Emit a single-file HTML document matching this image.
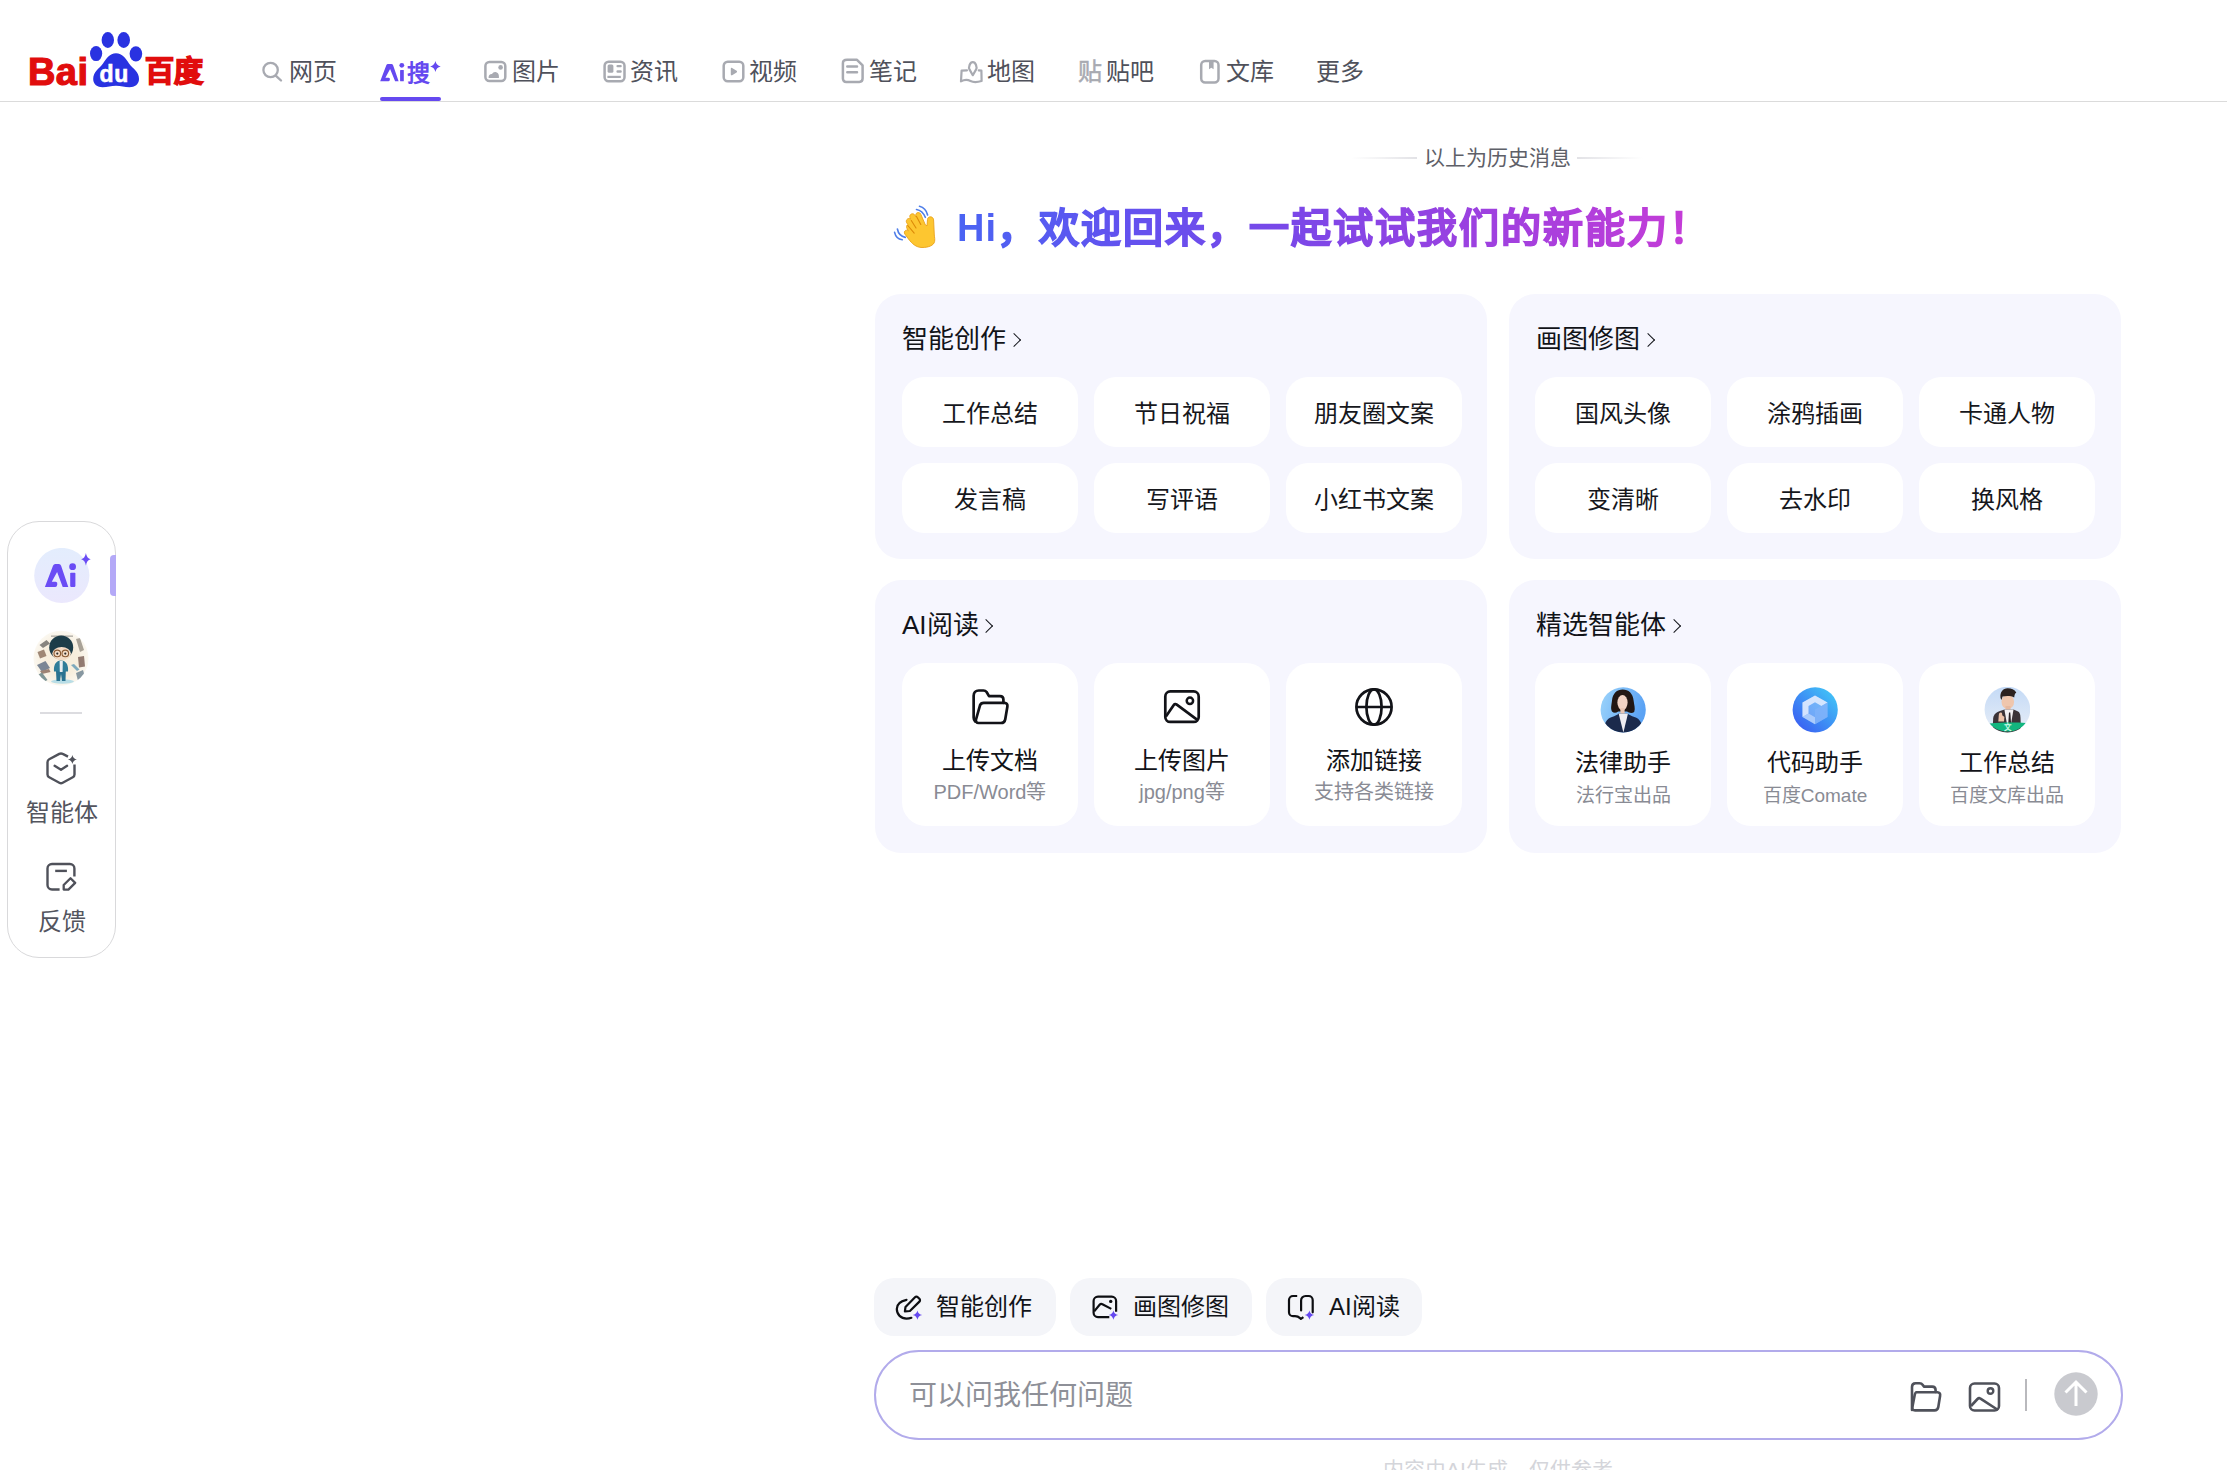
<!DOCTYPE html>
<html lang="zh-CN">
<head>
<meta charset="utf-8">
<style>
*{box-sizing:border-box;margin:0;padding:0}
html,body{width:2227px;height:1470px;overflow:hidden;background:#fff}
body{font-family:"Liberation Sans",sans-serif;color:#1f2026;position:relative}
.abs{position:absolute}
#hdr{position:absolute;left:0;top:0;width:2227px;height:102px;border-bottom:1px solid #dbdbdb}
.nav{position:absolute;top:57px;height:30px;font-size:24px;line-height:30px;color:#4f515b;white-space:nowrap}
.nav svg{position:absolute;top:4px;left:0}
.nav span{position:absolute;top:0}
.hist{position:absolute;left:1351px;top:146px;width:292px;height:24px;font-size:21px;line-height:24px;color:#5e6068;text-align:center}
.hist:before,.hist:after{content:"";position:absolute;top:11px;width:66px;height:2px}
.hist:before{left:0;background:linear-gradient(90deg,rgba(225,225,228,0),#e2e2e6)}
.hist:after{right:0;background:linear-gradient(90deg,#e2e2e6,rgba(225,225,228,0))}
.card{position:absolute;width:612px;background:#f6f6fe;border-radius:26px}
.ctitle{position:absolute;left:27px;top:30px;font-size:26px;line-height:30px;color:#111318;white-space:nowrap}
.ctitle i{display:inline-block;width:10px;height:10px;border-right:1.8px solid #111318;border-top:1.8px solid #111318;transform:rotate(45deg);margin-left:2.5px;position:relative;top:-3px}
.btn{position:absolute;width:176px;height:70px;padding-top:2px;background:#fff;border-radius:22px;font-size:24px;line-height:70px;text-align:center;color:#16171c}
.tile{position:absolute;top:83px;width:176px;height:163px;background:#fff;border-radius:24px;text-align:center}
.tile .t{position:absolute;left:0;right:0;top:85px;font-size:24px;line-height:26px;color:#121318}
.tile .s{position:absolute;left:0;right:0;top:117px;font-size:20px;line-height:24px;color:#898b94}
.tile svg{position:absolute}
.chip{position:absolute;top:1278px;height:58px;background:#f4f5f9;border-radius:20px;font-size:24px;line-height:58px;color:#111318;white-space:nowrap}
.chip svg{position:absolute;top:16px}
.chip span{position:absolute;top:0}
</style>
</head>
<body>
<div id="hdr">
  <!-- logo -->
  <svg class="abs" style="left:0;top:0" width="220" height="100" viewBox="0 0 220 100">
    <text x="28" y="85" font-family="Liberation Sans" font-weight="bold" font-size="38" fill="#e10d0d" stroke="#e10d0d" stroke-width="1.2" letter-spacing="0.4">Bai</text>
    <g fill="#2932e1">
      <ellipse cx="107.8" cy="40" rx="6.2" ry="7.9"/>
      <ellipse cx="123.7" cy="40" rx="6.3" ry="7.9"/>
      <ellipse cx="96.1" cy="53.6" rx="6.1" ry="7.5"/>
      <ellipse cx="135.9" cy="53.8" rx="6.3" ry="7.6"/>
      <path d="M116 53.3 C109.5 53.3 106.5 58.5 103 63.5 C99 69 93.2 71.5 93.2 79 C93.2 84.5 97.5 87.2 102.5 87.2 C107.5 87.2 111 85.8 116 85.8 C121 85.8 124.5 87.2 129.5 87.2 C134.5 87.2 139 84.5 139 79 C139 71.5 133 69 129 63.5 C125.5 58.5 122.5 53.3 116 53.3 Z"/>
    </g>
    <text x="99.5" y="81.5" font-family="Liberation Sans" font-weight="bold" font-size="23" fill="#fff" stroke="#fff" stroke-width="0.6" letter-spacing="0.6">du</text>
    <text x="144.5" y="82" font-weight="bold" font-size="29" fill="#e10d0d" stroke="#e10d0d" stroke-width="1.6" letter-spacing="0.5">百度</text>
  </svg>

  <!-- nav -->
  <div class="nav" style="left:261px;width:80px">
    <svg width="24" height="24" viewBox="0 0 24 24" style="top:3px"><circle cx="9.6" cy="10" r="7.2" fill="none" stroke="#a8aab1" stroke-width="2.3"/><path d="M15 15.8 L20 20.5" stroke="#a8aab1" stroke-width="2.4" stroke-linecap="round"/></svg>
    <span style="left:28px">网页</span>
  </div>
  <div class="nav" style="left:380px;width:62px;color:#6549f0">
    <svg width="62" height="30" viewBox="0 0 62 30" style="top:0">
      <path d="M0.2 24.3 L6.3 8.3 Q6.8 7 8 7 L11.4 7 Q12.6 7 13.1 8.3 L18.6 24.3 L15.1 24.3 L10.1 12 L5.4 20.8 L8.6 20.8 Q10.2 21 9.9 22.6 L9.7 23.3 Q9.4 24.3 8.4 24.3 Z" fill="#6549f0"/>
      <rect x="20.1" y="13.1" width="3.7" height="11.2" rx="0.5" fill="#6549f0"/>
      <circle cx="21.8" cy="8.3" r="2.4" fill="#6549f0"/>
      <path d="M55.4 4.1 Q56.3 8.58 60.7 9.5 Q56.3 10.42 55.4 14.9 Q54.5 10.42 50.1 9.5 Q54.5 8.58 55.4 4.1Z" fill="#6549f0"/>
    </svg>
    <span style="left:27px;top:1px;font-size:23px;font-weight:bold;color:#6549f0">搜</span>
  </div>
  <div class="abs" style="left:380px;top:97px;width:61px;height:4px;border-radius:2px;background:#6549f0"></div>
  <div class="nav" style="left:483px;width:80px">
    <svg width="26" height="24" viewBox="0 0 26 24" style="top:3px"><rect x="2.4" y="2" width="19.9" height="19" rx="4" fill="none" stroke="#a8aab1" stroke-width="2.5"/><circle cx="17.6" cy="7.4" r="2.3" fill="#a8aab1"/><path d="M5.6 18 C5.3 15.6 7 13.9 9 14.1 C9.8 12.6 11.2 11.9 12.5 12.1 C14.5 12.4 15.9 14.1 15.9 16.1 L15.9 18Z" fill="#a8aab1"/></svg>
    <span style="left:29px">图片</span>
  </div>
  <div class="nav" style="left:602px;width:80px">
    <svg width="26" height="24" viewBox="0 0 26 24" style="top:3px"><rect x="2.6" y="1.7" width="19.9" height="19.6" rx="4" fill="none" stroke="#a8aab1" stroke-width="2.5"/><rect x="5.6" y="4.4" width="5.8" height="8.4" rx="1.5" fill="#a8aab1"/><path d="M15.6 6.1 L18.6 6.1 M15.6 11.5 L18.6 11.5" stroke="#a8aab1" stroke-width="2.4" stroke-linecap="round"/><path d="M5.4 16.9 L18.8 16.9" stroke="#a8aab1" stroke-width="2.2"/></svg>
    <span style="left:28px">资讯</span>
  </div>
  <div class="nav" style="left:721px;width:80px">
    <svg width="26" height="24" viewBox="0 0 26 24" style="top:3px"><rect x="2.7" y="1.7" width="19.6" height="19.6" rx="4" fill="none" stroke="#a8aab1" stroke-width="2.5"/><path d="M9.8 8.6 C9.8 7.9 10.5 7.5 11.1 7.9 L15.6 10.8 C16.2 11.2 16.2 12 15.6 12.4 L11.1 15.3 C10.5 15.7 9.8 15.3 9.8 14.6Z" fill="#a8aab1"/></svg>
    <span style="left:28px">视频</span>
  </div>
  <div class="nav" style="left:841px;width:80px">
    <svg width="26" height="26" viewBox="0 0 26 26" style="top:1px"><path d="M6 1.8 L16 1.8 L21.6 7.4 L21.6 20.6 C21.6 22.6 20.3 23.9 18.3 23.9 L5.2 23.9 C3.2 23.9 1.9 22.6 1.9 20.6 L1.9 5.2 C1.9 3.2 3.6 1.8 6 1.8Z" fill="none" stroke="#a8aab1" stroke-width="2.5" stroke-linejoin="round"/><path d="M6.3 8.4 L16 8.4 M6.3 14.2 L16 14.2" stroke="#a8aab1" stroke-width="2.5" stroke-linecap="round"/></svg>
    <span style="left:28px">笔记</span>
  </div>
  <div class="nav" style="left:959px;width:80px">
    <svg width="26" height="24" viewBox="0 0 26 24" style="top:3px"><path d="M13.8 15.2 L10.6 9.6 C9.2 7.2 10.9 2.2 13.8 2.2 C16.7 2.2 18.4 7.2 17 9.6Z" fill="none" stroke="#a8aab1" stroke-width="2.2" stroke-linejoin="round"/><path d="M8 10.3 L2.6 10.6 L2 21.4 C5.5 19.5 8.5 19.5 11.5 21 C14.5 22.5 17.5 22.5 22.6 21 L22.4 10.6 L19.8 10.3" fill="none" stroke="#a8aab1" stroke-width="2.2" stroke-linejoin="round" stroke-linecap="round"/></svg>
    <span style="left:28px">地图</span>
  </div>
  <div class="nav" style="left:1078px;width:80px">
    <span style="left:0;color:#a8aab1;-webkit-text-stroke:0.5px #a8aab1">贴</span>
    <span style="left:28px">贴吧</span>
  </div>
  <div class="nav" style="left:1198px;width:80px">
    <svg width="24" height="26" viewBox="0 0 24 26" style="top:2px"><rect x="3.2" y="2" width="17.3" height="21.5" rx="4" fill="none" stroke="#a8aab1" stroke-width="2.5"/><path d="M11 2 L15.6 2 L15.6 10.3 L13.3 8.8 L11 10.3Z" fill="#a8aab1"/></svg>
    <span style="left:28px">文库</span>
  </div>
  <div class="nav" style="left:1316px;width:60px">
    <span style="left:0">更多</span>
  </div>
</div>

<div class="hist">以上为历史消息</div>

<!-- heading -->
<svg class="abs" style="left:885px;top:198px" width="60" height="57" viewBox="0 0 60 57">
  <path d="M37 49.5 C31 49.5 27 45.5 23.5 41 L19.8 36 C19 34.8 19.3 33 20.6 32.4 C21.6 31.9 22.6 32.2 23.4 33 L22 30.5 C21.2 29.2 21.5 27.3 22.8 26.4 L21.7 24.8 C20.9 23.5 21.3 21.7 22.6 20.9 C23.6 20.3 24.8 20.4 25.6 21.1 L25 19.6 C24.4 18.2 25 16.6 26.4 16 C27.8 15.4 29.3 16 30 17.3 L31 19 L30.8 17.6 C30.5 16.1 31.4 14.8 32.9 14.6 C34.4 14.4 35.6 15.3 36 16.7 L40.4 27 L42 27.8 L42.5 21.5 C42.6 19.7 44 18.7 45.6 18.8 C47.3 18.9 48.5 20.2 48.6 21.9 L49.3 37 C49.6 39.5 50 41.5 49.6 43.5 C48.8 47.5 43.5 49.5 37 49.5Z" fill="#fdc630" stroke="#e9a21c" stroke-width="0.9"/>
  <path d="M31.5 18.5 L35.8 26.5 M26.3 22.5 L31 30 M22.8 27.5 L29.2 35.2" fill="none" stroke="#dc8a08" stroke-width="1.1" stroke-linecap="round"/>
  <path d="M31.5 11.5 Q37.5 12.5 40.3 19.3 M34.5 8.3 Q40.8 9.8 42.6 17" fill="none" stroke="#4f7ee8" stroke-width="1.6" stroke-linecap="round"/>
  <path d="M12.4 31 Q13.6 37.8 20.3 39.4 M9.6 34.3 Q11 40.8 17.2 41.8" fill="none" stroke="#4f7ee8" stroke-width="1.6" stroke-linecap="round"/>
</svg>
<div class="abs" style="left:957px;top:201px;height:54px;font-size:40px;line-height:54px;letter-spacing:2px;font-weight:bold;white-space:nowrap;background:linear-gradient(90deg,#4a64f3 0%,#6252ef 22%,#7b47e8 45%,#a040df 72%,#c93cd6 100%);-webkit-background-clip:text;background-clip:text;color:transparent;-webkit-text-stroke:1.3px transparent"><span style="font-size:38px;letter-spacing:1px;vertical-align:1px;-webkit-text-stroke:0 transparent">Hi</span>，欢迎回来，一起试试我们的新能力！</div>

<!-- card 1 -->
<div class="card" style="left:875px;top:294px;height:265px">
  <div class="ctitle">智能创作<i></i></div>
  <div class="btn" style="left:27px;top:83px">工作总结</div>
  <div class="btn" style="left:219px;top:83px">节日祝福</div>
  <div class="btn" style="left:411px;top:83px">朋友圈文案</div>
  <div class="btn" style="left:27px;top:169px">发言稿</div>
  <div class="btn" style="left:219px;top:169px">写评语</div>
  <div class="btn" style="left:411px;top:169px">小红书文案</div>
</div>
<!-- card 2 -->
<div class="card" style="left:1509px;top:294px;height:265px">
  <div class="ctitle">画图修图<i></i></div>
  <div class="btn" style="left:26px;top:83px">国风头像</div>
  <div class="btn" style="left:218px;top:83px">涂鸦插画</div>
  <div class="btn" style="left:410px;top:83px">卡通人物</div>
  <div class="btn" style="left:26px;top:169px">变清晰</div>
  <div class="btn" style="left:218px;top:169px">去水印</div>
  <div class="btn" style="left:410px;top:169px">换风格</div>
</div>
<!-- card 3 -->
<div class="card" style="left:875px;top:580px;height:273px">
  <div class="ctitle">AI阅读<i></i></div>
  <div class="tile" style="left:27px">
    <svg style="left:68px;top:25px" width="40" height="40" viewBox="0 0 40 40"><path d="M5.2 33.6 C4.2 32.6 3.65 31.2 3.65 29.5 L3.65 7.8 C3.65 4.8 5.6 2.5 8.8 2.5 L13.5 2.5 C14.8 2.5 15.8 3 16.6 4 L19 8.1 L30 8.1 C32 8.1 33.4 9.6 33.4 11.6 L33.4 14.8" fill="none" stroke="#121318" stroke-width="2.7" stroke-linejoin="round" stroke-linecap="round"/><path d="M13.8 14.8 L34.6 14.8 C36.5 14.8 37.8 16.4 37.4 18.4 L35.2 31.4 C34.8 33.6 33.2 35 31 35 L8.5 35 C6.5 35 5.5 33.5 6 31.5 L10 17.3 C10.5 15.8 12 14.8 13.8 14.8Z" fill="none" stroke="#121318" stroke-width="2.7" stroke-linejoin="round"/></svg>
    <div class="t">上传文档</div>
    <div class="s">PDF/Word等</div>
  </div>
  <div class="tile" style="left:219px">
    <svg style="left:68px;top:25px" width="40" height="40" viewBox="0 0 40 40"><rect x="3.3" y="3.4" width="33.4" height="30.5" rx="5" fill="none" stroke="#121318" stroke-width="2.7"/><circle cx="27.9" cy="12.8" r="3.2" fill="none" stroke="#121318" stroke-width="2.5"/><path d="M3.9 28.6 L11.6 17.2 C12.4 16 13.6 15.8 14.8 16.6 L36 32.3" fill="none" stroke="#121318" stroke-width="2.7" stroke-linejoin="round"/></svg>
    <div class="t">上传图片</div>
    <div class="s">jpg/png等</div>
  </div>
  <div class="tile" style="left:411px">
    <svg style="left:68px;top:24px" width="40" height="40" viewBox="0 0 40 40"><circle cx="20" cy="20" r="17.6" fill="none" stroke="#121318" stroke-width="2.7"/><ellipse cx="20" cy="20" rx="7.6" ry="17.6" fill="none" stroke="#121318" stroke-width="2.7"/><path d="M3 20 L37 20" stroke="#121318" stroke-width="2.7"/></svg>
    <div class="t">添加链接</div>
    <div class="s">支持各类链接</div>
  </div>
</div>
<!-- card 4 -->
<div class="card" style="left:1509px;top:580px;height:273px">
  <div class="ctitle">精选智能体<i></i></div>
  <div class="tile" style="left:26px">
    <svg style="left:65px;top:24px" width="46" height="46" viewBox="0 0 46 46">
      <defs><linearGradient id="law" x1="0" y1="0" x2="1" y2="0.3"><stop offset="0" stop-color="#9fd6fb"/><stop offset="1" stop-color="#5aa2f4"/></linearGradient><clipPath id="c46"><circle cx="23.2" cy="22.8" r="22.6"/></clipPath></defs>
      <g clip-path="url(#c46)">
        <rect width="46" height="46" fill="url(#law)"/>
        <path d="M12 24.5 C10.3 21.5 11.6 17.5 12 13.5 C12.6 6.5 17 2.6 22.7 2.6 C28.5 2.6 33 6.5 33.6 13.5 C34 17.5 35.6 21.5 34.2 25 C32.2 26.6 29.2 26.2 27 24.6 L18.2 24.6 C16 26.2 13.6 26.2 12 24.5Z" fill="#211714"/>
        <ellipse cx="22.5" cy="15.6" rx="5.1" ry="7.6" fill="#f1d3c4"/>
        <rect x="20.4" y="21" width="4.2" height="6.5" fill="#e9c6b3"/>
        <path d="M3 46 C4 36.5 6.5 31.5 12 30 C15 29.1 17.6 27.8 18.8 26.6 L27.6 26.6 C28.8 27.8 31.4 29.1 34.4 30 C40 31.5 42.4 36.5 43.4 46Z" fill="#1b2a4c"/>
        <path d="M18.6 26.6 L28 26.6 L23.4 45.5Z" fill="#efedf2"/>
      </g>
    </svg>
    <div class="t" style="top:87px">法律助手</div>
    <div class="s" style="top:121px;font-size:19px">法行宝出品</div>
  </div>
  <div class="tile" style="left:218px">
    <svg style="left:65px;top:24px" width="46" height="46" viewBox="0 0 46 46">
      <defs><linearGradient id="cm" x1="0.1" y1="0.9" x2="0.9" y2="0.1"><stop offset="0" stop-color="#3a5ff2"/><stop offset="1" stop-color="#41c3f7"/></linearGradient></defs>
      <circle cx="23.2" cy="22.8" r="22.6" fill="url(#cm)"/>
      <path d="M23 8.5 L35.5 15.6 L35.5 30 L23 37.2 L10.5 30 L10.5 15.6Z" fill="#9bc4fb" opacity="0.55"/>
      <path d="M23 8.5 L35.5 15.6 L29.5 19 L23 15.3 L16.5 19 L16.5 26.6 L10.5 30 L10.5 15.6Z" fill="#dfeafe" opacity="0.9"/>
      <path d="M23 22.5 L29.5 19 L35.5 15.6 L35.5 30 L23 37.2Z" fill="#7fb2fa" opacity="0.75"/>
      <path d="M16.5 26.6 L23 30.3 L23 37.2 L10.5 30Z" fill="#b9d5fd" opacity="0.8"/>
    </svg>
    <div class="t" style="top:87px">代码助手</div>
    <div class="s" style="top:121px;font-size:19px">百度Comate</div>
  </div>
  <div class="tile" style="left:410px">
    <svg style="left:65px;top:24px" width="46" height="46" viewBox="0 0 46 46">
      <defs><linearGradient id="wk" x1="0" y1="0" x2="0" y2="1"><stop offset="0" stop-color="#c4daf6"/><stop offset="1" stop-color="#e8eef7"/></linearGradient><clipPath id="c46b"><circle cx="23.4" cy="22.6" r="22.8"/></clipPath></defs>
      <g clip-path="url(#c46b)">
        <rect width="46" height="46" fill="url(#wk)"/>
        <ellipse cx="23.8" cy="14.8" rx="6.3" ry="7.3" fill="#efc6ad"/>
        <path d="M16.5 11 C15.8 5 19 1.5 23.5 1.3 C27 1.2 30.5 2.5 32.3 5.5 C31 6 30.5 8 30.2 10.5 C27 8.5 22 8.6 18.5 9.5 L17.5 13Z" fill="#2b2220"/>
        <rect x="21.5" y="19" width="5" height="5" fill="#e6b9a0"/>
        <path d="M8.5 46 L9.2 31 C9.8 27 12.5 25.2 16 24 L20.5 22.6 L29.5 22.6 L33 24 C36 25.2 36.3 27.5 36.5 31 L37 46Z" fill="#3b3337"/>
        <path d="M20.4 22.6 L29.5 22.6 L26.5 40 L23.5 40Z" fill="#f2f0f2"/>
        <path d="M25 25.5 L26.3 25.5 L27.2 38 L24.2 38Z" fill="#2a2326"/>
        <path d="M14.3 34.5 L14.8 28 C15 26 16.2 25.4 17 25.6 C18 25.8 18.4 27 18.2 28.2 L20.4 30 L20 34.6Z" fill="#ecc2a8"/>
        <path d="M5.5 36.4 C17 35.5 30 35.3 42 36 C38 41 31 44.6 23.8 44.6 C16.5 44.6 9.5 41.2 5.5 36.4Z" fill="#13b67f"/>
        <text x="23.8" y="42.6" font-size="7.5" fill="#c9fbe6" text-anchor="middle" font-weight="bold">文</text>
      </g>
    </svg>
    <div class="t" style="top:87px">工作总结</div>
    <div class="s" style="top:121px;font-size:19px">百度文库出品</div>
  </div>
</div>

<!-- sidebar -->
<div class="abs" style="left:7px;top:521px;width:109px;height:437px;border:1.5px solid #d9d9db;border-radius:32px;background:#fff"></div>
<div class="abs" style="left:110px;top:555px;width:6px;height:41px;background:#b4a9f7;border-radius:4px 0 0 4px"></div>
<svg class="abs" style="left:33px;top:548px" width="60" height="58" viewBox="0 0 60 58">
  <defs><linearGradient id="aib" x1="0" y1="0" x2="0" y2="1"><stop offset="0" stop-color="#e3edfd"/><stop offset="1" stop-color="#ebe8fd"/></linearGradient></defs>
  <circle cx="28.8" cy="27.5" r="27.6" fill="url(#aib)"/>
  <path d="M11.9 38.9 L20 17.8 Q20.7 16.1 22.3 16.1 L25.9 16.1 Q27.5 16.1 28.1 17.8 L35.3 38.9 L29.7 38.9 L24.1 23.9 L18.8 33.8 L22.6 33.8 Q24.8 34 24.3 36.3 L24 37.4 Q23.6 38.9 22 38.9 Z" fill="#6a4cf5"/>
  <rect x="37.2" y="24.7" width="5.2" height="14.2" rx="0.8" fill="#6a4cf5"/>
  <circle cx="39.6" cy="18.7" r="3.4" fill="#6a4cf5"/>
  <path d="M52.9 4.9 Q53.72 10.13 57.7 11.2 Q53.72 12.27 52.9 17.5 Q52.08 12.27 48.1 11.2 Q52.08 10.13 52.9 4.9Z" fill="#6a4cf5"/>
</svg>
<svg class="abs" style="left:33px;top:630px" width="56" height="57" viewBox="0 0 56 57">
  <defs><radialGradient id="cr" cx="0.5" cy="0.5" r="0.5"><stop offset="0.6" stop-color="#f7eedd"/><stop offset="1" stop-color="#fbf8f1"/></radialGradient><clipPath id="c56"><circle cx="28" cy="28.2" r="27.5"/></clipPath></defs>
  <g clip-path="url(#c56)">
    <rect width="56" height="57" fill="url(#cr)"/>
    <g opacity="0.72"><path d="M18 5.5 L40 5.5 L40 6.8 L18 6.8Z" fill="#8d8a85"/>
    <path d="M6.5 15 L13.5 10 L17 13.5 L10 18Z" fill="#5c5a58"/>
    <path d="M4.5 22 L11 19.5 L13.5 26 L7 28.5Z" fill="#7d5f4c"/>
    <path d="M4 35 L12.5 31 L17 38 L9 42Z" fill="#4c5e78"/>
    <path d="M7 41 L16 39 L17.5 42 L9 44Z" fill="#7a5848"/>
    <path d="M4.5 45 L9 42.5 L14.5 50 L10 52.5Z" fill="#4f6f74"/>
    <path d="M43 9 L47 8 L51 20 L47 22Z" fill="#8a8378"/>
    <path d="M45 27 L51 26 L52 36.5 L46 37.5Z" fill="#6b4d45"/>
    <path d="M38 35 L41 34 L46.5 39.5 L44 41Z" fill="#4f8fb0"/>
    <path d="M43 43 L50 40 L52 47 L45 51Z" fill="#5b7484"/>
    </g>
    <ellipse cx="29.5" cy="51.5" rx="11.5" ry="2.2" fill="#b8dde6"/>
    <path d="M23 41 L32.8 41 L32.5 51 L29 51 L28 44 L27 51 L23.5 51Z" fill="#2b7391"/>
    <path d="M21 41.5 C20.5 36 22 31 28 30.6 C34 31 35.5 36 35 41.5Z" fill="#2f7d98"/>
    <path d="M26.6 31 L29.8 31 L29.6 42 L26.8 42Z" fill="#e9eef0"/>
    <circle cx="28.2" cy="17.5" r="12" fill="#1d3d49"/>
    <ellipse cx="28.6" cy="23.6" rx="9.3" ry="6.6" fill="#f4dcc6"/>
    <path d="M19 18 C22 15 33 14.5 38.5 18.5 L38.5 14 C34 9 22 9 19 13Z" fill="#1d3d49"/>
    <circle cx="24.3" cy="23.4" r="3.3" fill="none" stroke="#8a5a34" stroke-width="1.1"/>
    <circle cx="32.3" cy="23.4" r="3.3" fill="none" stroke="#8a5a34" stroke-width="1.1"/>
    <circle cx="24.3" cy="23.6" r="1.1" fill="#2a2a2a"/>
    <circle cx="32.3" cy="23.6" r="1.1" fill="#2a2a2a"/>
  </g>
</svg>
<div class="abs" style="left:40px;top:712px;width:42px;height:2px;background:#dcdce0"></div>
<svg class="abs" style="left:44px;top:750px" width="36" height="38" viewBox="0 0 36 38">
  <path d="M24 6.6 L18.7 3.9 C17.6 3.3 16.4 3.3 15.3 3.9 L5.2 9.3 C4.1 9.9 3.5 11 3.5 12.2 L3.5 24.5 C3.5 25.7 4.1 26.7 5.2 27.3 L15.3 32.7 C16.4 33.3 17.6 33.3 18.7 32.7 L28.8 27.3 C29.9 26.7 30.5 25.7 30.5 24.5 L30.5 14.5" fill="none" stroke="#4f515a" stroke-width="2.4" stroke-linecap="butt"/>
  <path d="M10.6 15.8 L17 19.8 L23.1 15.8" fill="none" stroke="#4f515a" stroke-width="2.4" stroke-linecap="round" stroke-linejoin="round"/>
  <path d="M28.4 5.1 Q29.16 8.83 32.9 9.6 Q29.16 10.37 28.4 14.1 Q27.63 10.37 23.9 9.6 Q27.63 8.83 28.4 5.1Z" fill="#4f515a"/>
</svg>
<div class="abs" style="left:0;top:796px;width:123px;font-size:24px;line-height:34px;text-align:center;color:#53555e">智能体</div>
<svg class="abs" style="left:44px;top:860px" width="36" height="36" viewBox="0 0 36 36">
  <path d="M15.6 29.5 L8 29.5 C5.5 29.5 3.5 27.5 3.5 25 L3.5 8.5 C3.5 6 5.5 4 8 4 L25.9 4 C28.4 4 30.4 6 30.4 8.5 L30.4 16.5" fill="none" stroke="#4f515a" stroke-width="2.4"/>
  <path d="M11.2 10.9 L22.9 10.9" stroke="#4f515a" stroke-width="2.4"/>
  <path d="M19.7 29.6 L19.7 25 L26.5 18.2 L31.2 22.9 L24.4 29.6 Z" fill="none" stroke="#4f515a" stroke-width="2.3" stroke-linejoin="round"/>
</svg>
<div class="abs" style="left:0;top:905px;width:123px;font-size:24px;line-height:34px;text-align:center;color:#53555e">反馈</div>

<!-- chips -->
<div class="chip" style="left:874px;width:182px">
  <svg style="left:20px;top:14px" width="30" height="30" viewBox="0 0 30 30">
    <path d="M12.5 7.8 C6.5 9 2.8 12.5 2.8 17 C2.8 22.5 7 26.6 12.5 26.6 C14.5 26.6 16 26.3 17.4 25.8" fill="none" stroke="#0d0e12" stroke-width="2.2" stroke-linecap="round"/>
    <path d="M10.9 19.4 L11.5 14.9 L21 5.2 C21.8 4.4 23 4.4 23.8 5.2 L25.4 6.8 C26.2 7.6 26.2 8.8 25.4 9.6 L15.9 19 Z" fill="none" stroke="#0d0e12" stroke-width="2.2" stroke-linejoin="round"/>
    <path d="M23.4 18.4 Q24.22 22.3 28.2 23.1 Q24.22 23.9 23.4 27.8 Q22.58 23.9 18.6 23.1 Q22.58 22.3 23.4 18.4Z" fill="#6549f0"/>
  </svg>
  <span style="left:62px">智能创作</span>
</div>
<div class="chip" style="left:1070px;width:182px">
  <svg style="left:20px;top:14px" width="30" height="30" viewBox="0 0 30 30">
    <path d="M19.3 25.1 L8 25.1 C5.5 25.1 3.6 23.2 3.6 20.7 L3.6 9.1 C3.6 6.6 5.5 4.7 8 4.7 L21.7 4.7 C24.2 4.7 26.1 6.6 26.1 9.1 L26.1 19.8" fill="none" stroke="#0d0e12" stroke-width="2.2"/>
    <path d="M4.2 19.4 L9.6 12.8 C10.4 11.9 11.4 11.7 12.4 12.2 L21.3 16.9" fill="none" stroke="#0d0e12" stroke-width="2.2" stroke-linejoin="round"/>
    <circle cx="20.7" cy="9.4" r="1.7" fill="#0d0e12"/>
    <path d="M23.4 18.4 Q24.22 22.3 28.2 23.1 Q24.22 23.9 23.4 27.8 Q22.58 23.9 18.6 23.1 Q22.58 22.3 23.4 18.4Z" fill="#6549f0"/>
  </svg>
  <span style="left:63px">画图修图</span>
</div>
<div class="chip" style="left:1266px;width:156px">
  <svg style="left:20px;top:14px" width="30" height="30" viewBox="0 0 30 30">
    <path d="M11.2 4 L7 4 C4.8 4 3 5.8 3 8 L3 20.2 C3 22.4 4.8 24.2 7 24.2 L9 24.2 C11 24.2 12.8 25 14.4 26.4 L14.9 26.9 L17.4 25.2" fill="none" stroke="#0d0e12" stroke-width="2.2" stroke-linejoin="round"/>
    <path d="M15.1 18.5 L15.1 8.5 C15.1 6 17.1 4 19.6 4 L22.7 4 C24.9 4 26.7 5.8 26.7 8 L26.7 20.3" fill="none" stroke="#0d0e12" stroke-width="2.2" stroke-linecap="round"/>
    <path d="M23.4 18.4 Q24.22 22.3 28.2 23.1 Q24.22 23.9 23.4 27.8 Q22.58 23.9 18.6 23.1 Q22.58 22.3 23.4 18.4Z" fill="#6549f0"/>
  </svg>
  <span style="left:63px">AI阅读</span>
</div>

<!-- input -->
<div class="abs" style="left:874px;top:1350px;width:1249px;height:90px;border:2px solid #b2abeb;border-radius:45px;background:#fff"></div>
<div class="abs" style="left:909px;top:1376px;font-size:28px;line-height:40px;color:#8e9098;white-space:nowrap">可以问我任何问题</div>
<svg class="abs" style="left:1908px;top:1379px" width="36" height="36" viewBox="0 0 36 36">
  <path d="M4 31 L4 8 C4 5.6 5.4 4.2 7.6 4.2 L11.5 4.2 C13 4.2 14 4.8 14.8 6 L15.9 7.6 L24.2 7.6 C26.2 7.6 27.6 9 27.6 11 L27.6 13" fill="none" stroke="#4f515a" stroke-width="2.6" stroke-linejoin="round" stroke-linecap="round"/>
  <path d="M8.3 13.2 L29.5 13.2 C31.5 13.2 32.5 14.7 32.1 16.7 L30.3 28 C29.9 30.3 28.6 31.4 26.5 31.4 L7 31.4 C4.9 31.4 3.9 30 4.4 28 L6.7 16 C7.1 14.3 7.5 13.2 8.3 13.2Z" fill="none" stroke="#4f515a" stroke-width="2.6" stroke-linejoin="round"/>
</svg>
<svg class="abs" style="left:1967px;top:1380px" width="36" height="34" viewBox="0 0 36 34">
  <rect x="3" y="3.5" width="29" height="27" rx="4.5" fill="none" stroke="#4f515a" stroke-width="2.6"/>
  <circle cx="23.5" cy="11" r="2.8" fill="none" stroke="#4f515a" stroke-width="2.4"/>
  <path d="M4 26 L10.5 19 C11.5 18 12.5 18 13.5 18.7 L31 30" fill="none" stroke="#4f515a" stroke-width="2.6" stroke-linejoin="round"/>
</svg>
<div class="abs" style="left:2025px;top:1379px;width:2px;height:32px;background:#b9b9bd"></div>
<svg class="abs" style="left:2054px;top:1372px" width="44" height="44" viewBox="0 0 44 44">
  <circle cx="22" cy="22" r="21.7" fill="#c9cacf"/>
  <path d="M22 34 L22 10 M11.5 20.5 L22 10 L32.5 20.5" fill="none" stroke="#fff" stroke-width="3"/>
</svg>
<div class="abs" style="left:1298px;top:1455px;width:400px;text-align:center;font-size:21px;line-height:30px;color:#d4d5da;white-space:nowrap">内容由AI生成，仅供参考</div>
</body>
</html>
